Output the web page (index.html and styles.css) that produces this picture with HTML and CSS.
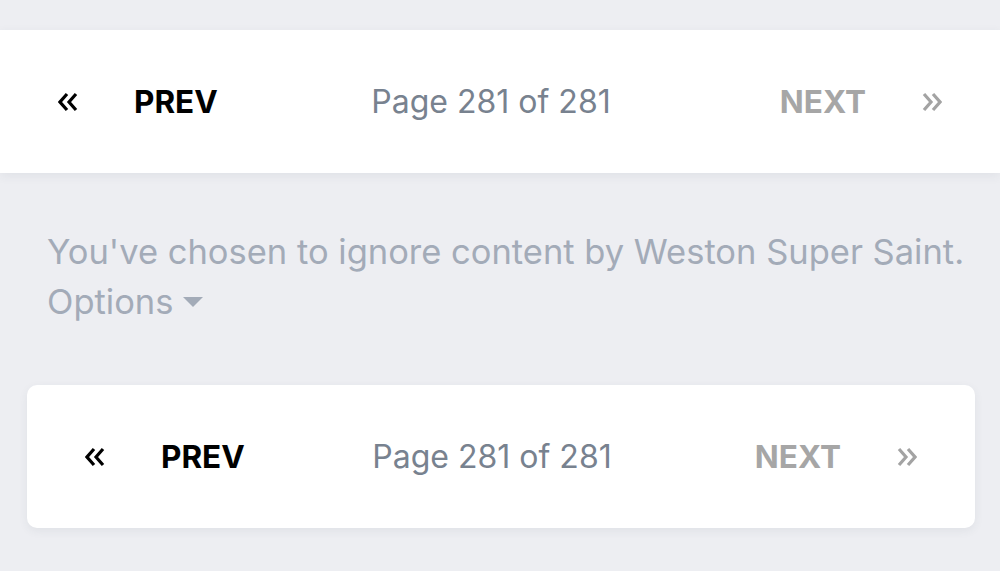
FILE: index.html
```html
<!DOCTYPE html>
<html>
<head>
<meta charset="utf-8">
<link rel="stylesheet" href="styles.css">
</head>
<body>
<div class="pager pager-full">
  <div class="side side-left">
    <svg class="chev" viewBox="0 0 20 20"><polyline points="9,2 2,10 9,18"/><polyline points="18,2 11,10 18,18"/></svg>
    <span class="prev">PREV</span>
  </div>
  <div class="page">Page 281 of 281</div>
  <div class="side side-right">
    <span class="next">NEXT</span>
    <svg class="chev chev-dim" viewBox="0 0 20 20"><polyline points="2,2 9,10 2,18"/><polyline points="11,2 18,10 11,18"/></svg>
  </div>
</div>
<div class="ignored">
  <p class="ignored-text">You've chosen to ignore content by Weston Super Saint.</p>
  <p class="options">Options <span class="caret"></span></p>
</div>
<div class="pager pager-card">
  <div class="side side-left">
    <svg class="chev" viewBox="0 0 20 20"><polyline points="9,2 2,10 9,18"/><polyline points="18,2 11,10 18,18"/></svg>
    <span class="prev">PREV</span>
  </div>
  <div class="page">Page 281 of 281</div>
  <div class="side side-right">
    <span class="next">NEXT</span>
    <svg class="chev chev-dim" viewBox="0 0 20 20"><polyline points="2,2 9,10 2,18"/><polyline points="11,2 18,10 11,18"/></svg>
  </div>
</div>
</body>
</html>
```
FILE: styles.css
```css
html, body {
  margin: 0;
  padding: 0;
}
body {
  background: #edeef2;
  font-family: Inter, "Noto Sans", sans-serif;
  padding-top: 30px;
  width: 1000px;
  height: 571px;
  box-sizing: border-box;
  overflow: hidden;
}
.pager {
  background: #ffffff;
  height: 143px;
  display: grid;
  grid-template-columns: 1fr auto 1fr;
  align-items: center;
  box-sizing: border-box;
  box-shadow: 0 3px 10px rgba(60, 70, 90, 0.07);
}
.pager-full {
  padding: 0 58px;
}
.pager-card {
  margin: 0 25px 0 27px;
  border-radius: 10px;
  padding: 0 58px;
}
.side {
  display: flex;
  align-items: center;
  gap: 56px;
}
.side-right {
  justify-self: end;
}
.chev {
  width: 20px;
  height: 20px;
  fill: none;
  stroke: #000;
  stroke-width: 3.2;
  stroke-linecap: butt;
  stroke-linejoin: miter;
}
.chev-dim {
  stroke: #a3a3a3;
}
.prev, .next {
  font-size: 31.5px;
  font-weight: 700;
}
.prev {
  color: #000;
}
.next {
  color: #a6a6a6;
}
.page {
  font-size: 32px;
  color: #78828f;
  margin-right: 18px;
}
.ignored {
  padding: 54px 0 0 47px;
  height: 212px;
  box-sizing: border-box;
}
.ignored p {
  margin: 0;
  font-size: 34.5px;
  line-height: 50px;
  color: #a3abb8;
}
.caret {
  display: inline-block;
  width: 0;
  height: 0;
  border-left: 10px solid transparent;
  border-right: 10px solid transparent;
  border-top: 10px solid #a3abb8;
  vertical-align: middle;
  margin-left: 0;
  position: relative;
  top: -3px;
}
```
